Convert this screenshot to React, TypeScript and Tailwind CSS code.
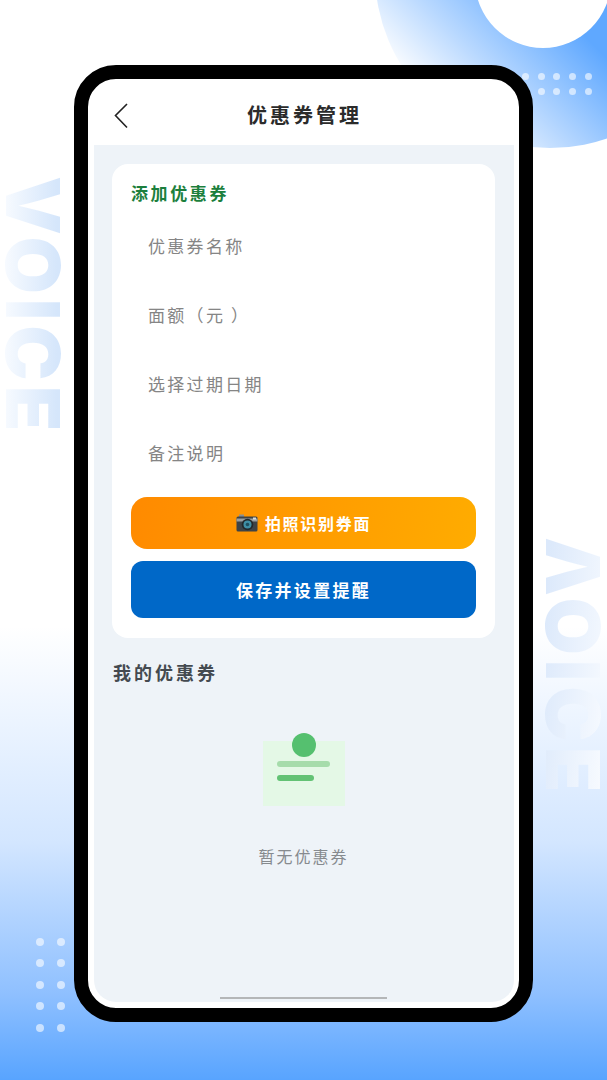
const fontStack = { fontFamily: '"Noto Sans CJK SC", "Liberation Sans", sans-serif' };

const fields = ["优惠券名称", "面额（元\u2009）", "选择过期日期", "备注说明"];

function CameraIcon() {
  return (
    <svg width="22" height="18" viewBox="0 0 22 18" className="shrink-0">
      <rect x="3" y="0.5" width="5" height="3" fill="#8a8f92" />
      <rect x="0.5" y="2.5" width="21" height="15" rx="1.5" fill="#3d4347" />
      <rect x="0.5" y="4.5" width="21" height="3" fill="#9aa0a3" />
      <rect x="17" y="3.5" width="3" height="2" fill="#d7dadb" />
      <circle cx="11.5" cy="10.5" r="5.8" fill="#23282b" />
      <circle cx="11.5" cy="10.5" r="4" fill="#3f8fa6" />
      <circle cx="11.5" cy="10.5" r="1.8" fill="#1d4f60" />
    </svg>
  );
}

export default function App() {
  return (
    <div style={fontStack} className="relative h-[1080px] w-[607px] overflow-hidden bg-[linear-gradient(180deg,#ffffff_0%,#ffffff_58%,#d3e6ff_78%,#8fc0ff_92%,#58a4ff_100%)]">
      {/* background decoration */}
      <div className="absolute left-[375px] top-[-202px] h-[350px] w-[350px] rounded-full bg-[linear-gradient(225deg,#5fa8ff_54%,#b8d8ff_72%,#ffffff_86%)]" />
      <div className="absolute left-[475px] top-[-88px] h-[136px] w-[136px] rounded-full bg-white" />
      <div className="absolute left-[522px] top-[73px] grid grid-cols-5 gap-x-[8.7px] gap-y-[8px]">
        {Array.from({ length: 10 }).map((_, i) => (
          <div key={i} className="h-[7px] w-[7px] rounded-full bg-white/60" />
        ))}
      </div>
      <div className="absolute left-[36px] top-[938px] grid grid-cols-2 gap-x-[13px] gap-y-[13.4px]">
        {Array.from({ length: 10 }).map((_, i) => (
          <div key={i} className="h-[8px] w-[8px] rounded-full bg-white/60" />
        ))}
      </div>
      <div className="absolute left-[-103px] top-[276px] w-[272px] rotate-90 whitespace-nowrap bg-[linear-gradient(180deg,#d5e6fb_10%,#f8fbff_100%)] bg-clip-text text-center text-[74px] font-black leading-[60px] tracking-[5px] text-transparent [font-family:Inter]">
        VOICE
      </div>
      <div className="absolute left-[437px] top-[637px] w-[272px] rotate-90 -scale-y-100 whitespace-nowrap bg-[linear-gradient(175deg,#dce9fb_10%,#f8fbff_100%)] bg-clip-text text-center text-[74px] font-black leading-[60px] tracking-[5px] text-transparent [font-family:Inter]">
        VOICE
      </div>

      {/* phone frame */}
      <div className="absolute left-[74px] top-[65px] h-[957px] w-[459px] rounded-[42px] border-[14px] border-black bg-white">
        <div className="flex h-full flex-col overflow-hidden rounded-[28px] pb-[6px] pl-[6px] pr-[5px]">
          <div className="relative flex h-[66px] shrink-0 items-center justify-center pt-[6px]">
            <svg width="16" height="28" viewBox="0 0 16 28" className="absolute left-[19px] top-[23px]" fill="none" stroke="#222" strokeWidth="1.6">
              <path d="M14 2 L2.5 13.5 L14 25.5" />
            </svg>
            <h1 className="pl-[1px] text-[20px] font-bold tracking-[3px] text-[#2b2b2b]">优惠券管理</h1>
          </div>

          <div className="relative flex flex-1 flex-col rounded-b-[22px] bg-[#eef3f8] pl-[18px] pt-[19px]">
            <div className="w-[383px] rounded-[16px] bg-white px-[19px] pb-[20px] pt-[18px]">
              <h2 className="h-[22px] text-[17px] font-bold leading-[22px] tracking-[2.6px] text-[#1c7f3d]">添加优惠券</h2>
              <div className="mt-[7px] flex flex-col">
                {fields.map((f) => (
                  <input
                    key={f}
                    readOnly
                    placeholder={f}
                    className="h-[69px] w-full bg-transparent pl-[17px] text-[17px] tracking-[2.3px] outline-none placeholder:text-[#858585]"
                  />
                ))}
              </div>
              <button className="mt-[10px] flex h-[52px] w-[345px] items-center justify-center gap-[7px] rounded-[16px] bg-[linear-gradient(100deg,#ff8a00,#ffac00)] text-[16px] font-bold tracking-[1.7px] text-white">
                <CameraIcon />
                拍照识别券面
              </button>
              <button className="mt-[12px] flex h-[57px] w-[345px] items-center justify-center rounded-[12px] bg-[#0068c8] text-[17px] font-bold tracking-[2.3px] text-white">
                保存并设置提醒
              </button>
            </div>

            <h2 className="mt-[21px] pl-[1px] text-[18px] font-bold leading-[26px] tracking-[3px] text-[#444a50]">我的优惠券</h2>

            <div className="mt-[43px] flex w-[383px] flex-col items-center">
              <svg width="82" height="78" viewBox="0 0 82 78">
                <rect x="0" y="13" width="82" height="65" fill="#e4f8e6" />
                <circle cx="41" cy="17" r="12" fill="#55c06f" />
                <rect x="14" y="33" width="53" height="6" rx="3" fill="#a6dcab" />
                <rect x="14" y="47" width="37" height="6" rx="3" fill="#62c274" />
              </svg>
              <p className="mt-[38px] text-[16px] leading-[24px] tracking-[2px] text-[#868a8e]">暂无优惠券</p>
            </div>

            <div className="absolute bottom-[3px] left-[126px] h-[2px] w-[167px] bg-[#b4b6b8]" />
          </div>
        </div>
      </div>
    </div>
  );
}
